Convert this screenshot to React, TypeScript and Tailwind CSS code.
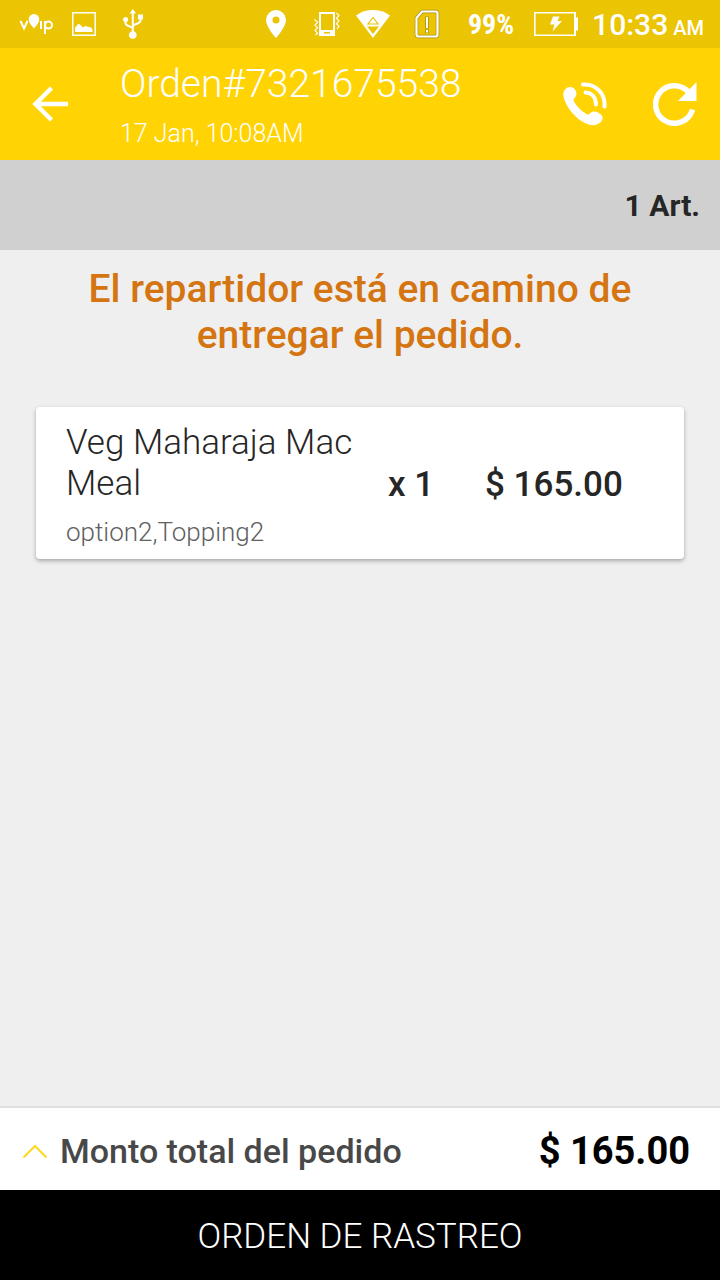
import React from 'react';

function VoipIcon() {
  return (
    <svg viewBox="0 0 36 32" className="h-8 w-9" fill="none" stroke="white" strokeWidth="2" aria-label="voip">
      <path d="M1.500 13l3.500 7.500L8.500 13" />
      <path d="M15 20.500c-4-4.500-5.300-6.700-5.300-9.200a5.300 5.300 0 0 1 10.600 0c0 2.500-1.300 4.700-5.300 9.200z" fill="white" stroke="none" />
      <path d="M22 13v8M26 13v13" />
      <circle cx="29.500" cy="17" r="3.500" />
    </svg>
  );
}

function PictureIcon() {
  return (
    <svg viewBox="0 0 24 24" className="h-6 w-6" fill="none">
      <rect x="0.800" y="0.800" width="22.400" height="22.400" stroke="white" strokeWidth="1.500" />
      <path d="M3 20v-4l2.500-3.500c1-.8 2-.8 3 .4l2.500 2.600c1.500-1 2.500-1.600 4-.9l1.500.5c2-.2 4 1 4 3.400V20z" fill="white" />
    </svg>
  );
}

function UsbIcon() {
  return (
    <svg viewBox="0 0 20 30" className="h-[30px] w-5" fill="none" stroke="white" strokeWidth="2">
      <path d="M9.800 25V4M2.500 11v2.500c0 2 1 2.700 2.500 3.300l4.800 2M17.500 8v3c0 2-1 2.700-2.500 3.300l-5.200 2.200" />
      <path d="M6.500 4.500L9.800 0l3.300 4.500zM15 5.500h5v5h-5z" fill="white" stroke="none" />
      <circle cx="2.600" cy="10.500" r="2.500" fill="white" stroke="none" />
      <circle cx="9.800" cy="26" r="3.800" fill="white" stroke="none" />
    </svg>
  );
}

function PinIcon() {
  return (
    <svg viewBox="0 0 20 28" className="h-7 w-5" fill="white">
      <path fillRule="evenodd" d="M10 0a10 10 0 0 0-10 10c0 7 10 18 10 18s10-11 10-18A10 10 0 0 0 10 0zm0 6.500a3.500 3.500 0 1 1 0 7 3.500 3.500 0 0 1 0-7z" />
    </svg>
  );
}

function VibrateIcon() {
  return (
    <svg viewBox="0 0 26 24" className="h-6 w-[26px]" fill="none" stroke="white">
      <path fillRule="evenodd" fill="white" stroke="none" d="M5 0h16v24H5zM7 2v16h12V2zM10 20v1.500h6V20z" />
      <path strokeWidth="1.200" d="M.5 7.500l3 2.800-2.500 2.700 2.500 2.700L1 18.400l2.500 2.700L1.500 23M22.500 1l2.500 2.500-2.500 2.700L25 9l-2.500 2.700 2.500 2.700L23 17" />
    </svg>
  );
}

function WifiIcon() {
  return (
    <svg viewBox="0 0 34 28" className="h-7 w-[34px]">
      <path fill="white" d="M0 5.500C10-1.700 24-1.700 34 5.500L17 28z" />
      <path fill="none" stroke="#ebc404" strokeWidth="1.200" d="M17 7.500l-5 6.500h10z" />
      <path fill="#ebc404" d="M11 16.500h12L17 24z" />
    </svg>
  );
}

function SimIcon() {
  return (
    <svg viewBox="0 0 26 30" className="h-[30px] w-[26px]" fill="none">
      <path stroke="#a68d1a" strokeWidth="3.500" d="M8 2.500h13.500Q23.500 2.500 23.500 4.500v21q0 2-2 2h-17q-2 0-2-2V9z" />
      <path stroke="white" strokeWidth="2.200" d="M8 2.500h13.500Q23.500 2.500 23.500 4.500v21q0 2-2 2h-17q-2 0-2-2V9z" />
      <path stroke="#a68d1a" strokeWidth="3.500" d="M13 7.500v12M13 20.500v3.500" />
      <path stroke="white" strokeWidth="2" d="M13 8v11M13 21v2.500" />
    </svg>
  );
}

function BatteryIcon() {
  return (
    <svg viewBox="0 0 44 24" className="h-6 w-11" fill="none">
      <path stroke="white" strokeWidth="1.600" d="M.8.800H41v22.400H.8z" />
      <path fill="white" d="M40 0h2v5.500h2v13h-2V24h-2zM19 4.500h6.500L23.500 9H28l-9.500 10.500 2-7H16z" />
    </svg>
  );
}

function BackIcon() {
  return (
    <svg viewBox="0 0 36 36" className="h-9 w-9" fill="none" stroke="white" strokeWidth="4.500">
      <path d="M36 18H4M19.500 2L3.500 18l16 16" />
    </svg>
  );
}

function CallIcon() {
  return (
    <svg viewBox="0 0 44 44" className="h-11 w-11">
      <path
        fill="white"
        d="M2.500 7C5 4.200 9.500 4.300 12 7.500c2 2.700 2 6.200-.5 8.500-1.300 1.200-1.200 2.200-.5 3.500 3 5.300 7 9.500 12.500 12.500 1.500.8 2.500.7 3.500-.6 2-2.700 5.500-2.400 8.500-.6 4.500 2.500 5.300 5.700 2.500 9-4 4.500-10 4-15.500 1.500C12.500 36.500 4.500 27 1 16.500-.3 12.500 0 9.500 2.500 7z"
      />
      <path fill="none" stroke="white" strokeWidth="4" strokeLinecap="round" d="M20 2.500C33 1.500 42.500 12 41.500 24.500M22.500 10.500c7 .5 10.500 5.500 10.500 12" />
    </svg>
  );
}

function RefreshIcon() {
  return (
    <svg viewBox="0 0 44 44" className="h-11 w-11">
      <path fill="none" stroke="white" strokeWidth="5.500" d="M35 9.500A18.800 18.800 0 1 0 39.500 27.500" />
      <path fill="white" d="M43.500 0v19H25z" />
    </svg>
  );
}

export default function App() {
  return (
    <div className="flex min-h-screen flex-col bg-[#efefef] font-['Roboto',sans-serif] text-[#262626]">
      <div className="flex h-12 items-center justify-between bg-[#ebc404] pr-4 pl-[19px] font-medium text-white">
        <div className="flex items-center">
          <VoipIcon />
          <span className="ml-[17px]"><PictureIcon /></span>
          <span className="ml-[27px]"><UsbIcon /></span>
        </div>
        <div className="flex items-center">
          <PinIcon />
          <span className="ml-7"><VibrateIcon /></span>
          <span className="ml-4"><WifiIcon /></span>
          <span className="ml-6"><SimIcon /></span>
          <span className="ml-7 pt-0.5 font-['Roboto_Condensed','Roboto',sans-serif] text-[28px] leading-8 font-bold">99%</span>
          <span className="ml-5"><BatteryIcon /></span>
          <span className="ml-[14px] pt-0.5 text-[30px] leading-8">10:33</span>
          <span className="ml-[5px] pt-2 text-[20px] leading-6">AM</span>
        </div>
      </div>

      <header className="flex h-28 items-center bg-[#ffd304] pr-[23px] pl-8 font-light text-white">
        <button type="button" aria-label="Atrás"><BackIcon /></button>
        <div className="ml-[52px] flex-1 pt-[2px]">
          <h1 className="text-[39px] leading-[48px]">Orden#7321675538</h1>
          <p className="mt-[10px] text-[25px] leading-8">17 Jan, 10:08AM</p>
        </div>
        <div className="flex items-center gap-[46px]">
          <button type="button" aria-label="Llamar"><CallIcon /></button>
          <button type="button" aria-label="Actualizar"><RefreshIcon /></button>
        </div>
      </header>

      <div className="flex h-[90px] items-center justify-end bg-[#d0d0d0] px-5 text-[30px] font-bold">
        1 Art.
      </div>

      <main className="flex-1 px-9">
        <p className="px-8 pt-4 text-center text-[39px] leading-[46px] font-medium text-[#d47512]">
          El repartidor está en camino de entregar el pedido.
        </p>
        <section className="mt-[49px] flex items-center rounded-[4px] bg-white px-[30px] pt-[15px] pb-2 shadow-[0_2px_4px_rgba(0,0,0,0.3)]">
          <div className="w-[322px]">
            <h2 className="text-[35px] leading-[41px] font-light">Veg Maharaja Mac Meal</h2>
            <p className="mt-[9px] text-[26px] leading-[38px] font-light text-[#606060]">option2,Topping2</p>
          </div>
          <span className="w-[97px] pb-[3px] text-[35px] font-medium">x 1</span>
          <span className="pb-[3px] text-[35px] font-medium">$ 165.00</span>
        </section>
      </main>

      <footer>
        <button type="button" className="flex h-[84px] w-full items-center border-t-2 border-[#e0e0e0] bg-white pt-[5px] pr-[30px] pl-[22px] text-left font-medium">
          <svg viewBox="0 0 26 16" className="h-4 w-[26px]" fill="none" stroke="#ffd720" strokeWidth="2">
            <path d="M1.500 13.500L13 2l11.500 11.500" />
          </svg>
          <span className="ml-3 flex-1 text-[34px] text-[#484848]">Monto total del pedido</span>
          <span className="text-[38px] font-bold text-black">$ 165.00</span>
        </button>
        <button type="button" className="flex h-[90px] w-full items-center justify-center bg-black pt-[5px] text-[35px] font-light text-white">
          ORDEN DE RASTREO
        </button>
      </footer>
    </div>
  );
}
